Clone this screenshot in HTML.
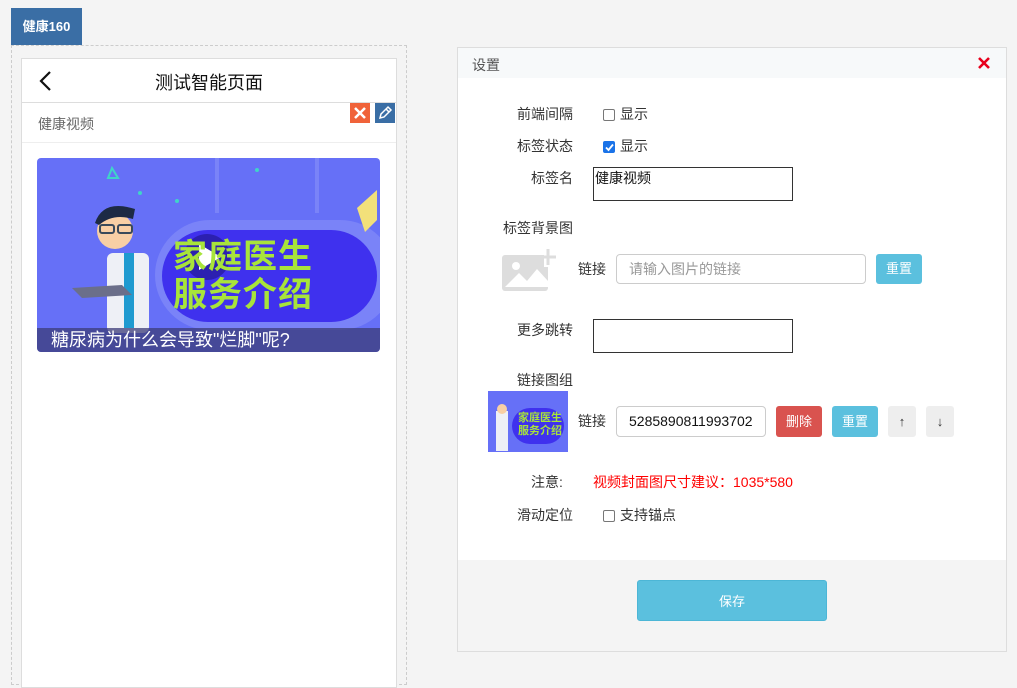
<!DOCTYPE html>
<html><head><meta charset="utf-8"><style>
*{box-sizing:border-box;margin:0;padding:0}
body{width:1017px;height:677px;background:#f4f4f4;font-family:"Liberation Sans","Noto Sans CJK SC",sans-serif;position:relative;overflow:hidden;font-size:14px;color:#333}
.a{position:absolute}
.tab{left:11px;top:8px;width:71px;height:37px;background:#3a6ea5;color:#fff;font-weight:bold;font-size:13px;line-height:37px;text-align:center}
.dash{left:11px;top:45px;width:396px;height:640px;border:1px dashed #ccc}
.phone{left:21px;top:58px;width:376px;height:630px;background:#fff;border:1px solid #ddd}
.lbl{position:absolute;width:120px;text-align:right;font-size:14px;line-height:16px;color:#333}
.cb{position:absolute;width:12px;height:12px;border:1px solid #777;border-radius:2px;background:#fff}
.btn{position:absolute;color:#fff;font-size:13px;text-align:center;border-radius:3px}
.t{position:absolute;line-height:16px}
</style></head><body>
<div class="a tab">健康160</div>
<div class="a dash"></div>
<div class="a phone">
  <svg class="a" style="left:16px;top:11px" width="16" height="22" viewBox="0 0 16 22"><path d="M12 2L3 11l9 9" stroke="#111" stroke-width="2.2" fill="none"/></svg>
  <div class="a" style="left:0;width:374px;top:10px;text-align:center;font-size:18px;color:#111">测试智能页面</div>
  <div class="a" style="left:0;top:43px;width:374px;height:1px;background:#ddd"></div>
  <div class="a" style="left:16px;top:55px;font-size:14px;color:#666">健康视频</div>
  <div class="a" style="left:328px;top:44px;width:20px;height:20px;background:#f0633a"><svg width="20" height="20"><path d="M5 5l10 10M15 5L5 15" stroke="#fff" stroke-width="2.5"/></svg></div>
  <div class="a" style="left:353px;top:44px;width:20px;height:20px;background:#3a6ea5"><svg width="20" height="20"><path d="M5 15l1-4 7-7 3 3-7 7z M11 6l3 3" stroke="#fff" stroke-width="1.5" fill="none"/></svg></div>
  <div class="a" style="left:0;top:83px;width:374px;height:1px;background:#eee"></div>
  <div class="a" style="left:15px;top:99px;width:343px;height:194px;border-radius:4px;overflow:hidden;background:#6670f7">
    <svg width="343" height="194" style="position:absolute;left:0;top:0">
      <path d="M180 0v55M280 0v55" stroke="#7a83f8" stroke-width="4"/>
      <rect x="118" y="62" width="240" height="110" rx="55" fill="#7a83f8"/>
      <rect x="125" y="72" width="215" height="92" rx="46" fill="#3f31ee"/>
      <path d="M320 50l20-18v30l-12 12z" fill="#f2e07a"/>
      <path d="M75 10l6 10h-10z" stroke="#3fd4c8" stroke-width="2" fill="none"/>
      <circle cx="140" cy="43" r="2" fill="#3fd4c8"/><circle cx="103" cy="35" r="2" fill="#3fd4c8"/><circle cx="220" cy="12" r="2" fill="#3fd4c8"/>
      <circle cx="170" cy="99" r="23" fill="#2a1fa8" opacity=".9"/>
      <path d="M162 86v26l22-13z" fill="#fff"/>
      <rect x="70" y="95" width="42" height="80" rx="6" fill="#eef0f6"/>
      <rect x="87" y="95" width="10" height="75" fill="#1f9ad0"/>
      <circle cx="78" cy="73" r="18" fill="#f8cfa5"/>
      <path d="M58 65q8-24 40-14l-2 10q-20-6-34 6z" fill="#1d2a44"/>
      <rect x="63" y="67" width="14" height="8" rx="2" stroke="#3a4a5a" stroke-width="2" fill="none"/>
      <rect x="81" y="67" width="14" height="8" rx="2" stroke="#3a4a5a" stroke-width="2" fill="none"/>
      <path d="M35 130l50-3 10 10-50 3z" fill="#6b6f8a"/>
    </svg>
    <div class="a" style="left:136px;top:80px;font-size:34px;font-weight:bold;color:#a8e43a;line-height:38px;letter-spacing:1px">家庭医生<br>服务介绍</div>
    <div class="a" style="left:0;top:170px;width:343px;height:24px;background:rgba(60,60,120,.75);color:#fff;font-size:18px;line-height:24px;padding-left:14px">糖尿病为什么会导致"烂脚"呢?</div>
  </div>
</div>

<div class="a" style="left:457px;top:47px;width:550px;height:605px;border:1px solid #ddd;background:#fff;overflow:hidden">
  <div class="a" style="left:0;top:0;width:548px;height:30px;background:#f7f9fa"></div>
  <div class="a" style="left:14px;top:7px;color:#555;font-size:14px">设置</div>
  <svg class="a" style="left:519px;top:8px" width="14" height="14"><path d="M2 2l10 10M12 2L2 12" stroke="#e8001c" stroke-width="2.6"/></svg>
  <div class="a" style="left:0;top:512px;width:548px;height:91px;background:#f4f4f4"></div>
</div>
<div class="btn" style="left:637px;top:580px;width:190px;height:41px;line-height:41px;background:#5bc0de;border:1px solid #4cb6d6">保存</div>

<div class="lbl" style="left:453px;top:106px">前端间隔</div>
<div class="cb" style="left:603px;top:109px"></div><div class="t" style="left:620px;top:106px">显示</div>
<div class="lbl" style="left:453px;top:138px">标签状态</div>
<div class="cb" style="left:603px;top:141px;background:#1a73e8;border-color:#1a73e8"><svg width="12" height="12" style="position:absolute;left:-1px;top:-1px"><path d="M3 6.5l2.5 2.5 4.5-5.5" stroke="#fff" stroke-width="1.8" fill="none"/></svg></div><div class="t" style="left:620px;top:138px">显示</div>
<div class="lbl" style="left:453px;top:170px">标签名</div>
<div class="a" style="left:593px;top:167px;width:200px;height:34px;border:1px solid #333;padding:1px 1px;color:#111;line-height:18px">健康视频</div>
<div class="lbl" style="left:453px;top:220px">标签背景图</div>
<svg class="a" style="left:500px;top:247px" width="58" height="46" viewBox="0 0 58 46"><rect x="2" y="8" width="46" height="36" rx="3" fill="#ddd"/><circle cx="16" cy="19" r="4" fill="#fff"/><path d="M5 40l14-14 8 8 10-12 11 12v6H5z" fill="#fff"/><rect x="44" y="4" width="12" height="16" fill="#fff"/><path d="M48 2v16M40 10h16" stroke="#ddd" stroke-width="3"/></svg>
<div class="t" style="left:578px;top:261px">链接</div>
<div class="a" style="left:616px;top:254px;width:250px;height:30px;border:1px solid #ccc;border-radius:4px;padding:6px 12px;color:#999;line-height:16px">请输入图片的链接</div>
<div class="btn" style="left:876px;top:254px;width:46px;height:30px;line-height:30px;background:#5bc0de">重置</div>
<div class="lbl" style="left:453px;top:322px">更多跳转</div>
<div class="a" style="left:593px;top:319px;width:200px;height:34px;border:1px solid #333"></div>
<div class="lbl" style="left:453px;top:372px">链接图组</div>
<div class="a" style="left:488px;top:391px;width:80px;height:61px;background:#6670f7;overflow:hidden">
  <div class="a" style="left:24px;top:17px;width:52px;height:36px;border-radius:18px;background:#3f31ee"></div>
  <div class="a" style="left:8px;top:20px;width:12px;height:40px;background:#eef0f6"></div>
  <div class="a" style="left:9px;top:13px;width:10px;height:10px;border-radius:50%;background:#f8cfa5"></div>
  <div class="a" style="left:30px;top:21px;font-size:11px;font-weight:bold;color:#a8e43a;line-height:13px">家庭医生<br>服务介绍</div>
</div>
<div class="t" style="left:578px;top:413px">链接</div>
<div class="a" style="left:616px;top:406px;width:150px;height:31px;border:1px solid #ccc;border-radius:4px;padding:6px 12px;color:#111;font-size:14px;line-height:17px">5285890811993702</div>
<div class="btn" style="left:776px;top:406px;width:46px;height:31px;line-height:31px;background:#d9534f">删除</div>
<div class="btn" style="left:832px;top:406px;width:46px;height:31px;line-height:31px;background:#5bc0de">重置</div>
<div class="btn" style="left:888px;top:406px;width:28px;height:31px;line-height:31px;background:#eee;color:#333">↑</div>
<div class="btn" style="left:926px;top:406px;width:28px;height:31px;line-height:31px;background:#eee;color:#333">↓</div>
<div class="t" style="left:531px;top:474px">注意:</div>
<div class="t" style="left:593px;top:474px;color:#f00">视频封面图尺寸建议：1035*580</div>
<div class="lbl" style="left:453px;top:507px">滑动定位</div>
<div class="cb" style="left:603px;top:510px"></div><div class="t" style="left:620px;top:507px">支持锚点</div>
</body></html>
